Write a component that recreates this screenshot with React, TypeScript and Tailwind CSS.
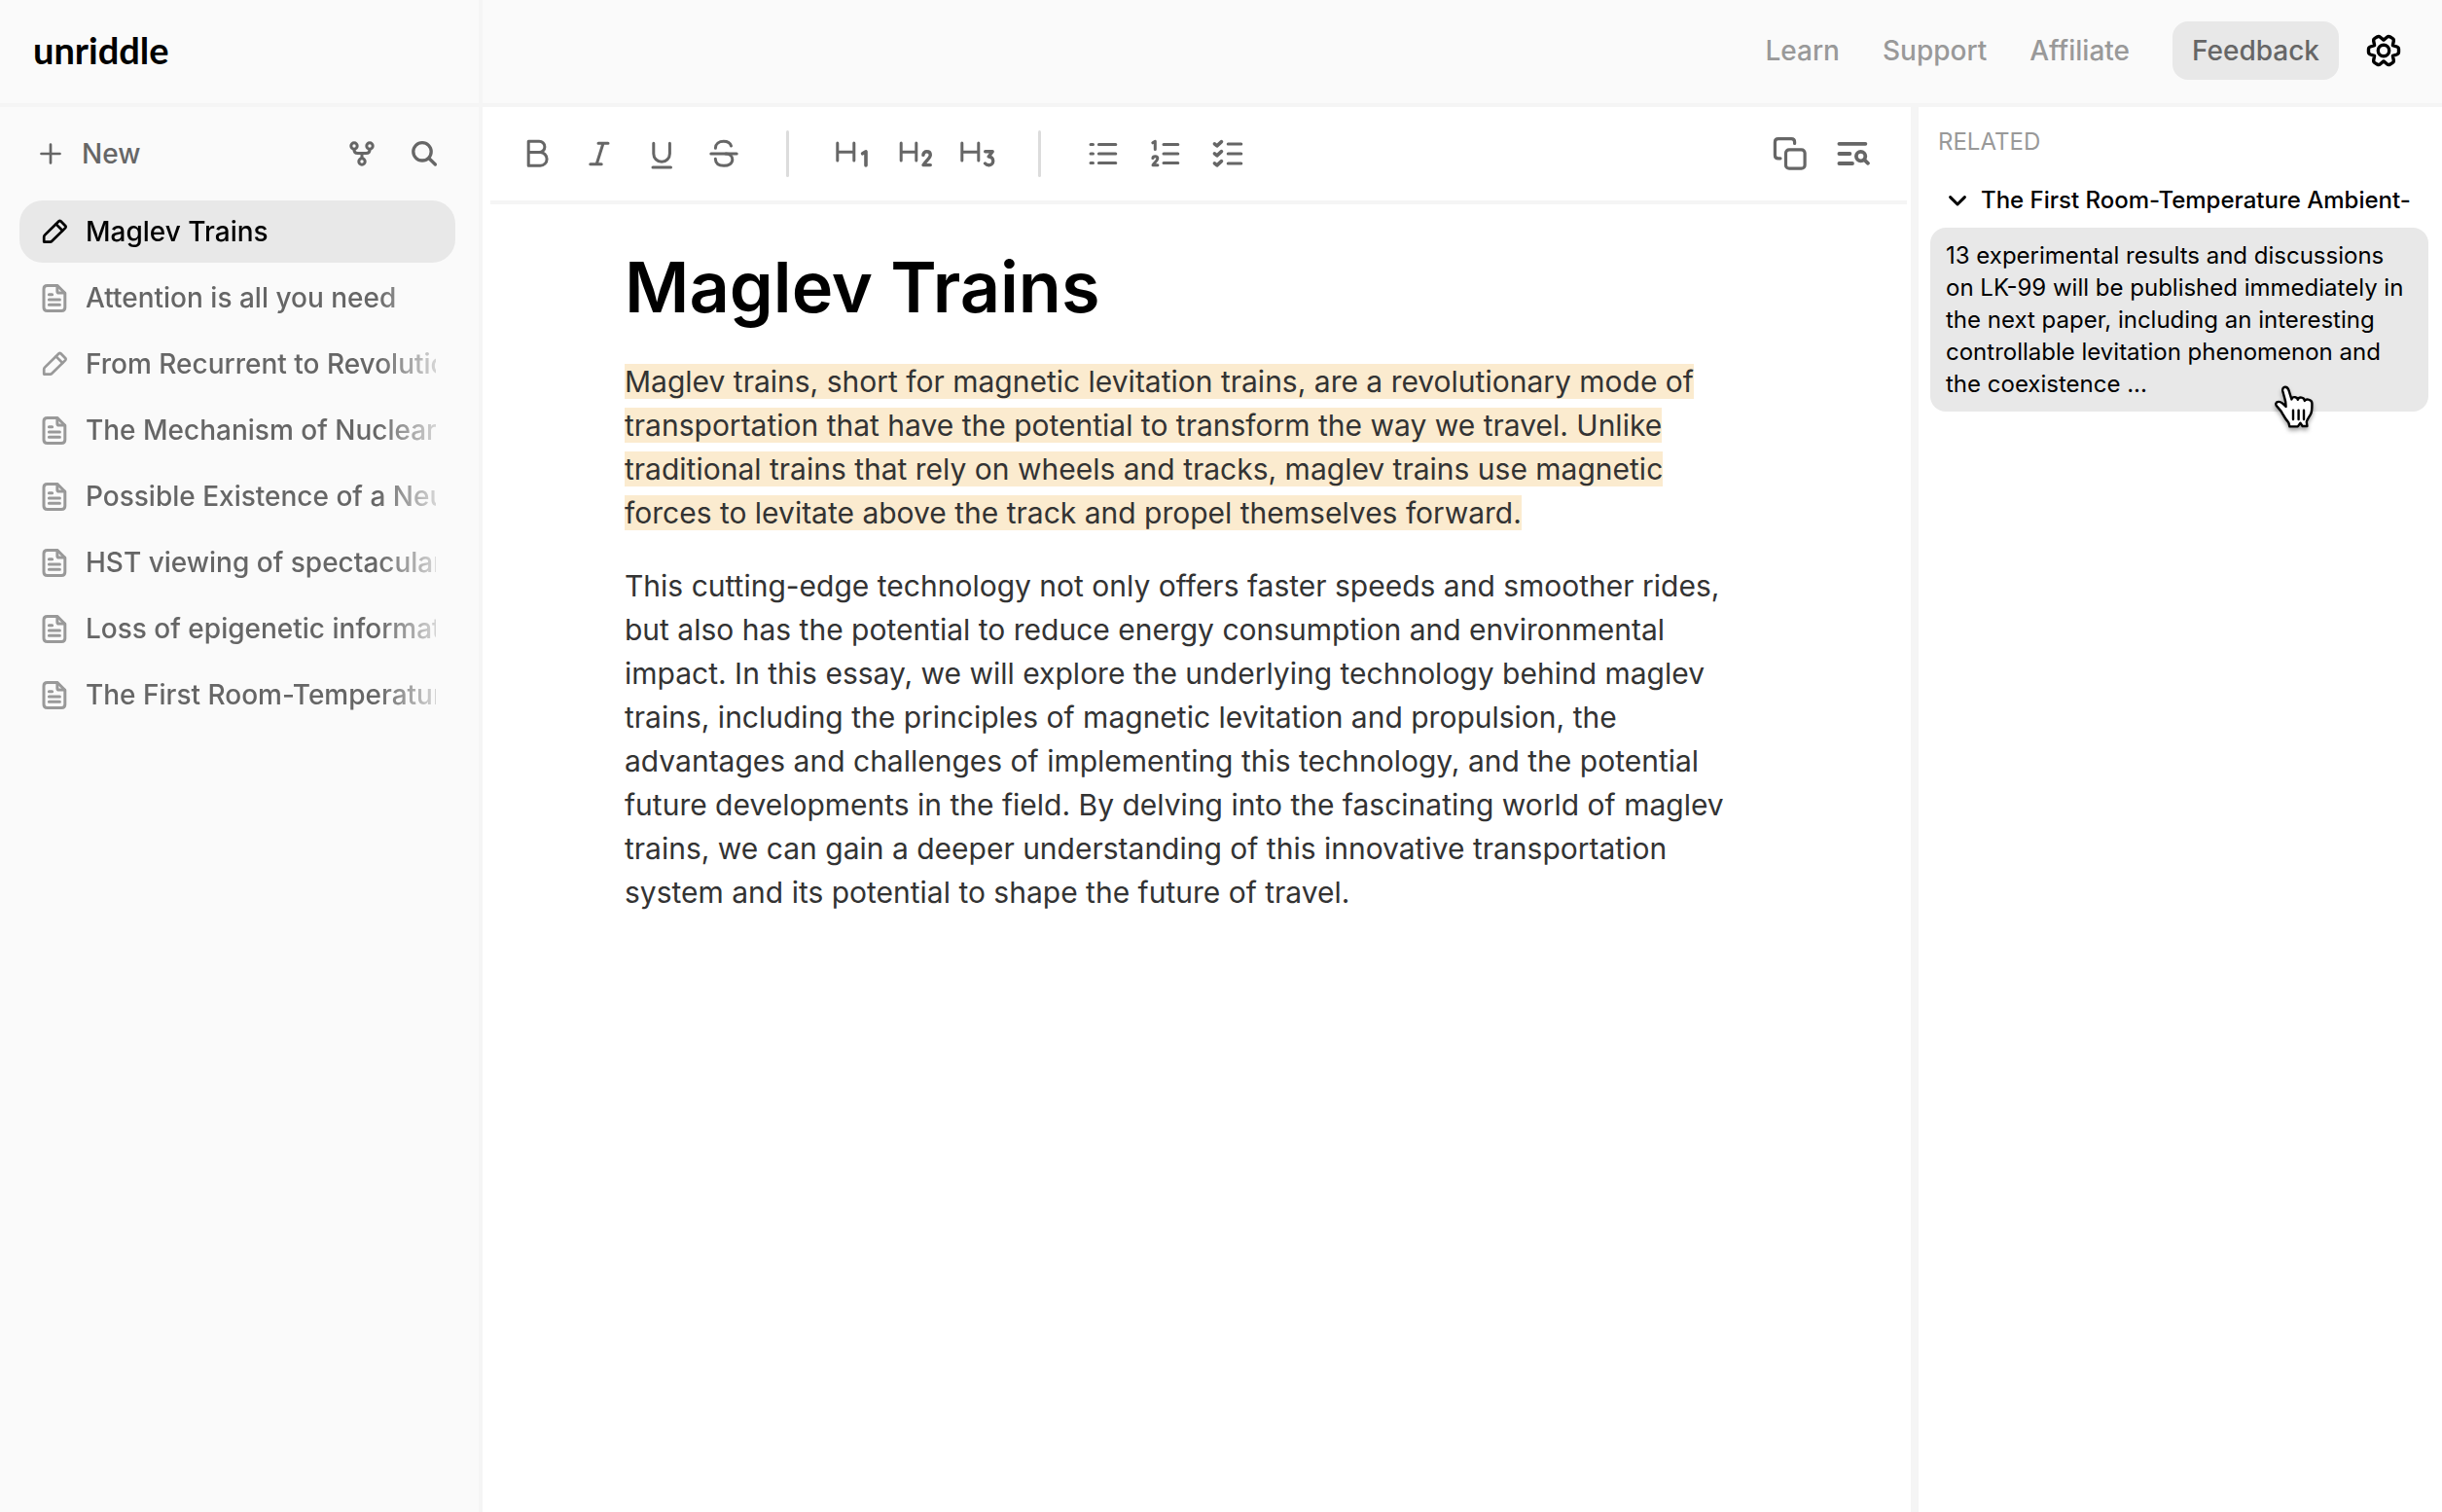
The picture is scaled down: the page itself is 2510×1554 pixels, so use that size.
import type { ReactNode } from "react";

type IconProps = { children: ReactNode; size?: 32 | 64; className?: string; stroke?: number };

/* Stroke icon on a 32 or 64 unit grid. */
function Icon({ children, size = 64, className = "", stroke = 3 }: IconProps) {
  return (
    <svg
      viewBox={size === 64 ? "0 0 64 64" : "0 0 32 32"}
      className={`${size === 64 ? "size-16" : "size-8"} shrink-0 ${className}`}
      fill="none"
      stroke="currentColor"
      strokeWidth={stroke}
      strokeLinecap="round"
      strokeLinejoin="round"
      aria-hidden="true"
    >
      {children}
    </svg>
  );
}

const pencilIcon = (
  <>
    <path d="M5.2 26.6V21.4Q5.2 20.4 6 19.6L20.6 5.2Q21.5 4.4 22.4 5.2L27.3 10.2Q28.1 11.2 27.3 12.1L13.4 25.8Q12.6 26.6 11.6 26.6Z" />
    <path d="M17.6 8.4L24.2 15" />
  </>
);

const documentIcon = (
  <>
    <path d="M8.6 3.5H19L26.8 11.2V26Q26.8 29.6 23.2 29.6H8.6Q5 29.6 5 26V7.1Q5 3.5 8.6 3.5Z" />
    <path d="M18.9 3.8V9.4Q18.9 11 20.5 11H26.4" />
    <path d="M10.4 12.8H13.6M10.4 18H21.4M10.4 23.2H21.4" />
  </>
);

const documents = [
  { title: "Maglev Trains", kind: "note", active: true },
  { title: "Attention is all you need", kind: "doc" },
  { title: "From Recurrent to Revolution", kind: "note" },
  { title: "The Mechanism of Nuclear", kind: "doc" },
  { title: "Possible Existence of a Neutron", kind: "doc" },
  { title: "HST viewing of spectacular", kind: "doc" },
  { title: "Loss of epigenetic information", kind: "doc" },
  { title: "The First Room-Temperature", kind: "doc" },
];

const textTools = [
  {
    label: "Bold",
    icon: <path d="M23.2 19.2H34.2A5.7 5.7 0 0 1 34.2 30.6H23.2M34.2 30.6H35.3A6.7 6.7 0 0 1 35.3 44.2H23.2V19.2" />,
  },
  { label: "Italic", icon: <path d="M31 21.3H41M22.8 42.7H34.2M36 21.3L29.2 42.7" /> },
  { label: "Underline", icon: <path d="M23.8 21.2V32A8.3 8.3 0 0 0 40.4 32V21.2M23 46H41.5" /> },
  {
    label: "Strikethrough",
    icon: (
      <>
        <path d="M23.4 26.2C23.4 22 27 19.2 31.8 19.2C36 19.2 38.6 21 39.5 24" />
        <path d="M18.8 32H45.2" />
        <path d="M34 32C38.5 32 40.8 34.8 40.8 38C40.8 42 37 44.3 32 44.3C26.5 44.3 23.5 41.5 23.3 37.3" />
      </>
    ),
  },
];

const headingTools = [
  {
    label: "Heading 1",
    icon: (
      <>
        <path d="M17.8 21V39M34.8 21V39M17.8 30.2H34.8" />
        <path strokeWidth="3.6" d="M43.6 31.8L47 29.9V44" />
      </>
    ),
  },
  {
    label: "Heading 2",
    icon: (
      <>
        <path d="M19.2 21V39M34.8 21V39M19.2 30.2H34.8" />
        <path strokeWidth="3.4" d="M41.9 33.4C41.9 31 43.6 29.7 45.6 29.7C47.8 29.7 49.3 31 49.3 33.2C49.3 36.2 45 39 42 43.6H49.3" />
      </>
    ),
  },
  {
    label: "Heading 3",
    icon: (
      <>
        <path d="M17.8 21V39M34.8 21V39M17.8 30.2H34.8" />
        <path strokeWidth="3.4" d="M41.7 29.7H49.2L45.2 35C48 35 49.7 36.9 49.7 39.4C49.7 42 47.7 43.7 45.3 43.7Q43 43.7 41.6 42" />
      </>
    ),
  },
];

const listTools = [
  {
    label: "Bullet list",
    icon: <path d="M19 22.4H21.5M19 32H21.5M19 41.5H21.5M27.4 22.4H44.8M27.4 32H44.8M27.4 41.5H44.8" />,
  },
  {
    label: "Numbered list",
    icon: (
      <>
        <path d="M30 22.4H44.8M30 32H44.8M30 41.5H44.8" />
        <path d="M18.8 20.8L21.3 19.3V27.6" />
        <path d="M18.9 36.6C19.2 34.2 23.8 34.2 23.8 37C23.8 39.2 20.4 41.2 19 43.8H23.9" />
      </>
    ),
  },
  {
    label: "Task list",
    icon: (
      <>
        <path d="M32.2 22H45.8M32.2 32H45.8M32.2 42H45.8" />
        <path strokeWidth="3.6" d="M18.4 21.8L20.9 23.8L25.5 19.6M18.4 31.8L20.9 33.8L25.5 29.6M18.4 41.8L20.9 43.8L25.5 39.6" />
      </>
    ),
  },
];

function ToolGroup({ tools }: { tools: { label: string; icon: ReactNode }[] }) {
  return (
    <div className="flex">
      {tools.map((t) => (
        <button key={t.label} type="button" aria-label={t.label}>
          <Icon>{t.icon}</Icon>
        </button>
      ))}
    </div>
  );
}

function Divider() {
  return <div className="mx-8 h-12 w-[3px] rounded-full bg-[#dcdcdc]" />;
}

function Sidebar() {
  return (
    <aside className="flex w-[496px] shrink-0 flex-col border-r-4 border-[#f5f5f5]">
      <div className="flex h-[110px] shrink-0 items-center border-b-4 border-[#f5f5f5] pb-1 pl-[34px]">
        <a href="#" className="font-['Lato',sans-serif] text-[38px] leading-10 font-bold text-black">
          unriddle
        </a>
      </div>
      <div className="flex h-24 items-center justify-between pr-6 pl-5 text-[#666]">
        <button type="button" className="flex items-center text-[28px] font-medium">
          <Icon stroke={2.7}>
            <path d="M32 22.5V41.5M22.5 32H41.5" />
          </Icon>
          New
        </button>
        <div className="flex">
          <button type="button" aria-label="Connections">
            <Icon>
              <circle cx="24" cy="24" r="3.2" />
              <circle cx="40" cy="24" r="3.2" />
              <circle cx="32" cy="40" r="3.2" />
              <path d="M24 27.5V28Q24 31.6 27.6 31.6H36.4Q40 31.6 40 28V27.5M32 31.6V36.5" />
            </Icon>
          </button>
          <button type="button" aria-label="Search">
            <Icon stroke={3.3}>
              <circle cx="30" cy="29.8" r="9.2" />
              <path d="M37 36.8L43.4 43" />
            </Icon>
          </button>
        </div>
      </div>
      <nav aria-label="Documents" className="flex flex-col gap-1 pr-6 pl-5">
        {documents.map((d) => (
          <a
            key={d.title}
            href="#"
            aria-current={d.active ? "page" : undefined}
            className={`flex h-16 items-center gap-4 rounded-3xl pr-5 pl-5 text-[28px] font-medium ${
              d.active ? "bg-[#e8e8e8] text-black" : "text-[#666]"
            }`}
          >
            <Icon size={32} stroke={d.kind === "note" ? 2.7 : 3} className={d.active ? "" : "text-[#999]"}>
              {d.kind === "note" ? pencilIcon : documentIcon}
            </Icon>
            <span className="min-w-0 flex-1 overflow-hidden whitespace-nowrap [mask-image:linear-gradient(to_right,black_calc(100%-60px),rgba(0,0,0,0.25))]">
              {d.title}
            </span>
          </a>
        ))}
      </nav>
    </aside>
  );
}

function TopBar() {
  return (
    <header className="flex h-[110px] shrink-0 items-center justify-end border-b-4 border-[#f5f5f5] pr-10 pb-0.5 text-[28px] font-medium">
      <nav className="flex items-center gap-11 text-[#999]">
        <a href="#">Learn</a>
        <a href="#">Support</a>
        <a href="#">Affiliate</a>
        <a href="#" className="flex h-[60px] items-center rounded-2xl bg-[#e8e8e8] px-5 text-[#666]">
          Feedback
        </a>
      </nav>
      <button type="button" aria-label="Settings" className="ml-[26px]">
        <svg
          viewBox="0 0 40 40"
          className="size-10"
          fill="none"
          stroke="black"
          strokeWidth="3.4"
          strokeLinejoin="round"
          aria-hidden="true"
        >
          <path d="M29.4 14.6L33.6 16Q35.5 16.7 35.5 18.4V21.6Q35.5 23.3 33.6 24L29.4 25.4L30.3 29.8Q30.6 31.8 29.1 32.6L26.4 34.2Q24.9 35.1 23.4 33.8L20 30.9L16.6 33.8Q15.1 35.1 13.6 34.2L10.9 32.6Q9.4 31.8 9.7 29.8L10.6 25.4L6.4 24Q4.5 23.3 4.5 21.6V18.4Q4.5 16.7 6.4 16L10.6 14.6L9.7 10.2Q9.4 8.2 10.9 7.4L13.6 5.8Q15.1 4.9 16.6 6.2L20 9.1L23.4 6.2Q24.9 4.9 26.4 5.8L29.1 7.4Q30.6 8.2 30.3 10.2Z" />
          <circle cx="20" cy="20" r="5.7" />
        </svg>
      </button>
    </header>
  );
}

function Editor() {
  return (
    <main className="min-w-0 flex-1">
      <div
        role="toolbar"
        aria-label="Formatting"
        className="mr-1 ml-2 flex h-[100px] items-center justify-between border-b-4 border-[#f5f5f5] pr-6 pl-4 text-[#666]"
      >
        <div className="flex items-center">
          <ToolGroup tools={textTools} />
          <Divider />
          <ToolGroup tools={headingTools} />
          <Divider />
          <ToolGroup tools={listTools} />
        </div>
        <div className="flex">
          <button type="button" aria-label="Copy">
            <Icon stroke={3.2}>
              <rect x="27.5" y="27.8" width="19.6" height="19.4" rx="3.5" />
              <path d="M36.6 21.5V20Q36.6 16.6 33.2 16.6H19.8Q16.4 16.6 16.4 20V33.4Q16.4 36.8 19.8 36.8H22" />
            </Icon>
          </button>
          <button type="button" aria-label="Find in document">
            <Icon stroke={3.8}>
              <path d="M18.4 21.8H45.4M18.4 32H29.4M18.4 42H32" />
              <circle cx="40.6" cy="34.6" r="4.7" />
              <path d="M44.4 38.4L48 41.8" />
            </Icon>
          </button>
        </div>
      </div>
      <article className="mx-auto max-w-[1176px] pt-10 text-[30px] leading-[45px] text-[#333]">
        <h1 className="text-7xl leading-[90px] font-semibold text-black">Maglev Trains</h1>
        <p className="mt-[30px] max-w-6xl">
          <mark className="bg-[#fbebcf] text-inherit">
            Maglev trains, short for magnetic levitation trains, are a revolutionary mode of transportation that
            have the potential to transform the way we travel. Unlike traditional trains that rely on wheels and
            tracks, maglev trains use magnetic forces to levitate above the track and propel themselves forward.
          </mark>
        </p>
        <p className="mt-[30px] max-w-6xl">
          This cutting-edge technology not only offers faster speeds and smoother rides, but also has the
          potential to reduce energy consumption and environmental impact. In this essay, we will explore the
          underlying technology behind maglev trains, including the principles of magnetic levitation and
          propulsion, the advantages and challenges of implementing this technology, and the potential future
          developments in the field. By delving into the fascinating world of maglev trains, we can gain a deeper
          understanding of this innovative transportation system and its potential to shape the future of travel.
        </p>
      </article>
    </main>
  );
}

function HandCursor() {
  return (
    <svg
      viewBox="0 0 44 48"
      className="absolute top-40 right-[116px] h-12 w-11 drop-shadow-[0_3px_2px_rgba(0,0,0,0.35)]"
      fill="white"
      stroke="black"
      strokeWidth="2.4"
      strokeLinecap="round"
      strokeLinejoin="round"
      aria-hidden="true"
    >
      <path d="M17.4 44.4L16.4 40.6C14.6 38.4 12.4 35.6 10.8 32.4C9.2 29 7.6 27 5.2 24.6C3 22.4 2.6 20.8 4 19.6C6 18.2 9 19.4 10.8 21.2L13.6 24L13.2 19C12.4 15 11 11 10.2 7.8C9.8 5.4 11 3.8 12.8 3.8C14.8 3.8 15.8 5 16.6 7.4L19.4 16.4C19.8 14.6 21.4 14 23 14.2C24.6 14.4 25.6 15.4 25.8 16.8C26.4 14.8 28 14.4 29.6 14.6C31.4 14.8 32.6 15.8 32.8 18C33.6 16.6 35 16.2 36.6 16.6C38.8 17 40.4 18.2 40.4 20.6C40.4 24 40.6 28 39.2 31.2C37.8 34.2 35.4 37 34.8 39.6L35.4 44H30.6L28.4 40.8L25.8 44.4Z" />
      <path d="M21 27.6V37M26.6 27.6V37M32 27.6V37" />
    </svg>
  );
}

function RelatedPanel() {
  return (
    <aside className="w-[546px] shrink-0 border-l-8 border-[#f5f5f5] pt-5 pr-[14px] pl-3 text-2xl">
      <h2 className="pl-2 leading-8 text-[#999]">RELATED</h2>
      <button type="button" className="mt-4 flex h-14 w-full items-center gap-2 pr-4 pl-3 font-medium text-black">
        <Icon size={32}>
          <path d="M8.6 12.6L16 20L23.4 12.6" />
        </Icon>
        <span className="min-w-0 overflow-hidden whitespace-nowrap">The First Room-Temperature Ambient-</span>
      </button>
      <div className="relative rounded-2xl bg-[#e8e8e8] px-4 py-3 leading-[33px] text-black">
        13 experimental results and discussions on LK-99 will be published immediately in the next paper, including
        an interesting controllable levitation phenomenon and the coexistence ...
        <HandCursor />
      </div>
    </aside>
  );
}

export default function App() {
  return (
    <div className="flex min-h-screen bg-[#fafafa] font-['Inter',sans-serif]">
      <Sidebar />
      <div className="flex min-w-0 flex-1 flex-col">
        <TopBar />
        <div className="flex flex-1 bg-white">
          <Editor />
          <RelatedPanel />
        </div>
      </div>
    </div>
  );
}
